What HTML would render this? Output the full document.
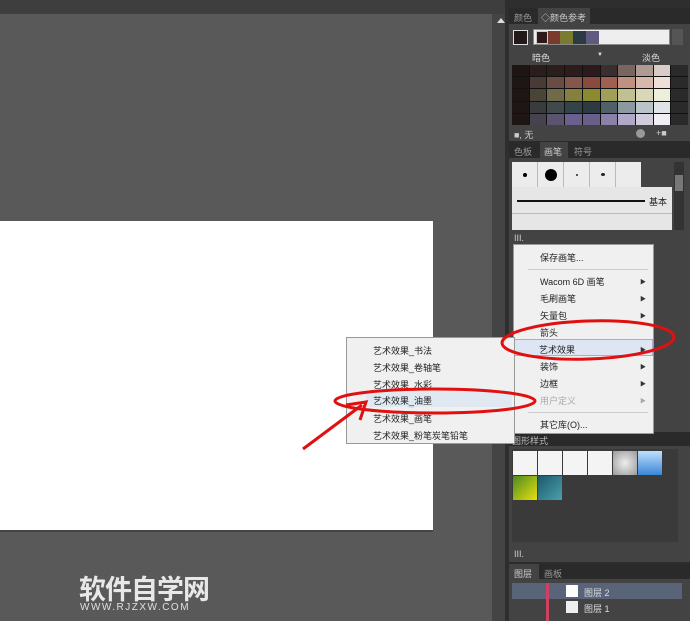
<!DOCTYPE html>
<html><head><meta charset="utf-8"><style>
*{margin:0;padding:0;box-sizing:border-box}
body{width:690px;height:621px;overflow:hidden;background:#585858;position:relative;font-family:"Liberation Sans","Noto Sans CJK SC",sans-serif;font-size:9px;color:#ddd}
.a{position:absolute}
.tab{position:absolute;font-size:9px;color:#999}
.menu{background:#f0f0f0;border:1px solid #999;color:#222;font-size:9px}
.menu div{position:absolute;left:26px}
.ar{position:absolute;font-size:6px;color:#333}
</style></head><body>
<div class="a" style="left:0;top:0;width:505px;height:14px;background:#3e3e3e"></div>
<div class="a" style="left:0;top:14px;width:492px;height:607px;background:#595959"></div>
<div class="a" style="left:492px;top:14px;width:13px;height:607px;background:#444"></div>
<div class="a" style="left:497px;top:18px;width:0;height:0;border-left:4px solid transparent;border-right:4px solid transparent;border-bottom:5px solid #ddd"></div>
<div class="a" style="left:0;top:221px;width:433px;height:309px;background:#fff"></div>
<div class="a" style="left:0;top:530px;width:433px;height:2px;background:#444"></div>
<div class="a" style="left:79px;top:573px;font-size:27px;font-weight:bold;color:#e8e8e8;letter-spacing:-1px;font-family:'Noto Sans CJK SC',sans-serif;line-height:30px">软件自学网</div>
<div class="a" style="left:80px;top:602px;font-size:10px;color:#e0e0e0;letter-spacing:1.5px">WWW.RJZXW.COM</div>

<!-- dock -->
<div class="a" style="left:505px;top:0;width:185px;height:621px;background:#2e2e2e"></div>
<div class="a" style="left:509px;top:8px;width:181px;height:16px;background:#2a2a2a"></div>
<div class="tab" style="left:514px;top:11px">颜色</div>
<div class="a" style="left:538px;top:8px;width:52px;height:16px;background:#434343"></div>
<div class="tab" style="left:541px;top:11px;color:#ccc">◇颜色参考</div>
<div class="a" style="left:509px;top:24px;width:181px;height:117px;background:#434343"></div>
<div class="a" style="left:513px;top:30px;width:15px;height:15px;border:1px solid #ddd;background:#221a18"></div>
<div class="a" style="left:533px;top:29px;width:137px;height:16px;background:#eee;border:1px solid #888"></div>
<div class="a" style="left:536px;top:31px;width:12px;height:13px;background:#2b1a18;border:1px solid #ccc"></div>
<div class="a" style="left:548px;top:31px;width:12px;height:13px;background:#7a3a2e"></div>
<div class="a" style="left:560px;top:31px;width:13px;height:13px;background:#7a7a30"></div>
<div class="a" style="left:573px;top:31px;width:13px;height:13px;background:#2e3a42"></div>
<div class="a" style="left:586px;top:31px;width:13px;height:13px;background:#5e5a80"></div>
<div class="a" style="left:672px;top:29px;width:11px;height:16px;background:#555"></div>
<div class="a" style="left:532px;top:51px;color:#ddd">暗色</div>
<div class="a" style="left:597px;top:52px;font-size:6px">▼</div>
<div class="a" style="left:642px;top:51px;color:#ddd">淡色</div>
<div class="a" style="left:512px;top:65px;width:176px;height:60px;display:grid;grid-template-columns:repeat(10,1fr);grid-template-rows:repeat(5,1fr);gap:1px;background:#111" id="g"></div>
<div class="a" style="left:514px;top:128px;color:#ccc">■, 无</div>
<div class="a" style="left:636px;top:129px;width:9px;height:9px;border-radius:50%;background:#999"></div>
<div class="a" style="left:656px;top:128px;color:#ccc">+■</div>
<div class="a" style="left:509px;top:141px;width:181px;height:17px;background:#2a2a2a"></div>
<div class="tab" style="left:514px;top:145px">色板</div>
<div class="a" style="left:540px;top:142px;width:28px;height:16px;background:#434343"></div>
<div class="tab" style="left:544px;top:145px;color:#ccc">画笔</div>
<div class="tab" style="left:574px;top:145px">符号</div>
<div class="a" style="left:509px;top:158px;width:181px;height:88px;background:#434343"></div>
<div class="a" style="left:512px;top:162px;width:160px;height:68px;background:#e6e6e6"></div>
<div class="a" style="left:512px;top:162px;width:129px;height:25px;display:flex;gap:1px;background:#bbb">
<div style="flex:1;background:#ececec;display:flex;align-items:center;justify-content:center"><i style="width:4px;height:4px;border-radius:50%;background:#000"></i></div>
<div style="flex:1;background:#ececec;display:flex;align-items:center;justify-content:center"><i style="width:12px;height:12px;border-radius:50%;background:#000"></i></div>
<div style="flex:1;background:#ececec;display:flex;align-items:center;justify-content:center"><i style="width:2px;height:2px;background:#555"></i></div>
<div style="flex:1;background:#ececec;display:flex;align-items:center;justify-content:center"><i style="width:4px;height:3px;border-radius:50%;background:#222"></i></div>
<div style="flex:1;background:#ececec"></div></div>
<div class="a" style="left:641px;top:162px;width:31px;height:25px;background:#434343"></div>
<div class="a" style="left:517px;top:200px;width:128px;height:2px;background:#111"></div>
<div class="a" style="left:649px;top:195px;color:#222">基本</div>
<div class="a" style="left:512px;top:213px;width:160px;height:1px;background:#bbb"></div>
<div class="a" style="left:674px;top:162px;width:10px;height:68px;background:#333"></div>
<div class="a" style="left:675px;top:175px;width:8px;height:16px;background:#777"></div>
<div class="a" style="left:514px;top:233px;color:#ccc">III.</div>

<div class="a" style="left:509px;top:246px;width:181px;height:188px;background:#434343"></div>
<div class="a" style="left:509px;top:432px;width:181px;height:14px;background:#2a2a2a"></div>
<div class="tab" style="left:512px;top:434px;color:#bbb">图形样式</div>
<div class="a" style="left:509px;top:446px;width:181px;height:116px;background:#434343"></div>
<div class="a" style="left:512px;top:449px;width:166px;height:93px;background:#3a3a3a"></div>
<div class="a" style="left:513px;top:451px;display:flex;gap:1px">
<div style="width:24px;height:24px;background:#f4f4f4"></div><div style="width:24px;height:24px;background:#f4f4f4"></div><div style="width:24px;height:24px;background:#f4f4f4"></div><div style="width:24px;height:24px;background:#f4f4f4"></div><div style="width:24px;height:24px;background:radial-gradient(#eee,#999)"></div><div style="width:24px;height:24px;background:linear-gradient(#bfe0ff,#3a86d6)"></div></div>
<div class="a" style="left:513px;top:476px;width:24px;height:24px;background:linear-gradient(135deg,#4a8a20,#e8e010)"></div>
<div class="a" style="left:538px;top:476px;width:24px;height:24px;background:linear-gradient(135deg,#1c5a6a,#4aa0b0)"></div>
<div class="a" style="left:514px;top:549px;color:#ccc">III.</div>
<div class="a" style="left:509px;top:563px;width:181px;height:16px;background:#2a2a2a"></div>
<div class="a" style="left:509px;top:564px;width:30px;height:15px;background:#434343"></div>
<div class="tab" style="left:514px;top:567px;color:#ccc">图层</div>
<div class="tab" style="left:544px;top:567px">画板</div>
<div class="a" style="left:509px;top:579px;width:181px;height:42px;background:#434343"></div>
<div class="a" style="left:512px;top:583px;width:170px;height:16px;background:#5a6478"></div>
<div class="a" style="left:546px;top:583px;width:3px;height:38px;background:#d04060"></div>
<div class="a" style="left:566px;top:585px;width:12px;height:12px;background:#fff"></div>
<div class="a" style="left:566px;top:601px;width:12px;height:12px;background:#eee"></div>
<div class="a" style="left:584px;top:586px;color:#ddd">图层 2</div>
<div class="a" style="left:584px;top:602px;color:#ddd">图层 1</div>

<!-- menu -->
<div class="a menu" style="left:513px;top:244px;width:141px;height:190px">
<div style="top:6px">保存画笔...</div>
<div style="top:30px">Wacom 6D 画笔</div>
<div style="top:47px">毛刷画笔</div>
<div style="top:64px">矢量包</div>
<div style="top:81px">箭头</div>
<div style="top:98px">艺术效果</div>
<div style="top:115px">装饰</div>
<div style="top:132px">边框</div>
<div style="top:149px;color:#aaa">用户定义</div>
<div style="top:173px">其它库(O)...</div>
</div>
<div class="a" style="left:514px;top:339px;width:139px;height:17px;background:#dde6f2;border:1px solid #aac"></div>
<div class="a" style="left:539px;top:343px;color:#222">艺术效果</div>
<div class="ar" style="left:640px;top:277px">▶</div><div class="ar" style="left:640px;top:294px">▶</div><div class="ar" style="left:640px;top:311px">▶</div><div class="ar" style="left:640px;top:345px">▶</div><div class="ar" style="left:640px;top:362px">▶</div><div class="ar" style="left:640px;top:379px">▶</div><div class="ar" style="left:640px;top:396px;color:#aaa">▶</div>
<div class="a" style="left:528px;top:269px;width:120px;height:1px;background:#ccc"></div>
<div class="a" style="left:528px;top:412px;width:120px;height:1px;background:#ccc"></div>

<div class="a menu" style="left:346px;top:337px;width:169px;height:107px">
<div style="top:6px">艺术效果_书法</div>
<div style="top:23px">艺术效果_卷轴笔</div>
<div style="top:40px">艺术效果_水彩</div>
<div style="top:57px">艺术效果_油墨</div>
<div style="top:74px">艺术效果_画笔</div>
<div style="top:91px">艺术效果_粉笔炭笔铅笔</div>
</div>
<div class="a" style="left:366px;top:391px;width:146px;height:16px;background:#e0e8f2"></div>
<div class="a" style="left:373px;top:394px;color:#222">艺术效果_油墨</div>

<svg class="a" style="left:0;top:0" width="690" height="621">
<ellipse cx="588" cy="340" rx="86" ry="19" fill="none" stroke="#e01010" stroke-width="3" transform="rotate(-2 588 340)"/>
<ellipse cx="435" cy="401" rx="100" ry="12" fill="none" stroke="#e01010" stroke-width="3"/>
<path d="M303 449 L362 405" stroke="#e01010" stroke-width="3" fill="none"/>
<path d="M346 405 L366 402 L360 420" stroke="#e01010" stroke-width="3" fill="none"/>
</svg>
<script>
var c=[["#1e1614","#2a1e1c","#2c1e1c","#2e1c1c","#2e1a1a","#3a2e2e","#7a6660","#b09a94","#d8ccc8","#2a2a2a"],
["#1e1614","#4a3a36","#6a4c44","#84564c","#8a4a3e","#a06050","#c09080","#d8b8aa","#eee0d8","#2a2a2a"],
["#1e1614","#4a4438","#706a48","#848040","#8a8a30","#a0a058","#c0c090","#d8d8b8","#eeeedc","#2a2a2a"],
["#1e1614","#383c3c","#404a4a","#34424a","#2e3a42","#506068","#8a9aa0","#b8c4c8","#e0e4e6","#2a2a2a"],
["#1e1614","#46424e","#5a5470","#6a6090","#6a5e8a","#8a80a8","#b0a8c8","#d0ccdc","#eeeef4","#2a2a2a"]];
var g=document.getElementById('g');c.forEach(r=>r.forEach(x=>{var d=document.createElement('div');d.style.background=x;g.appendChild(d)}));
</script>
</body></html>
